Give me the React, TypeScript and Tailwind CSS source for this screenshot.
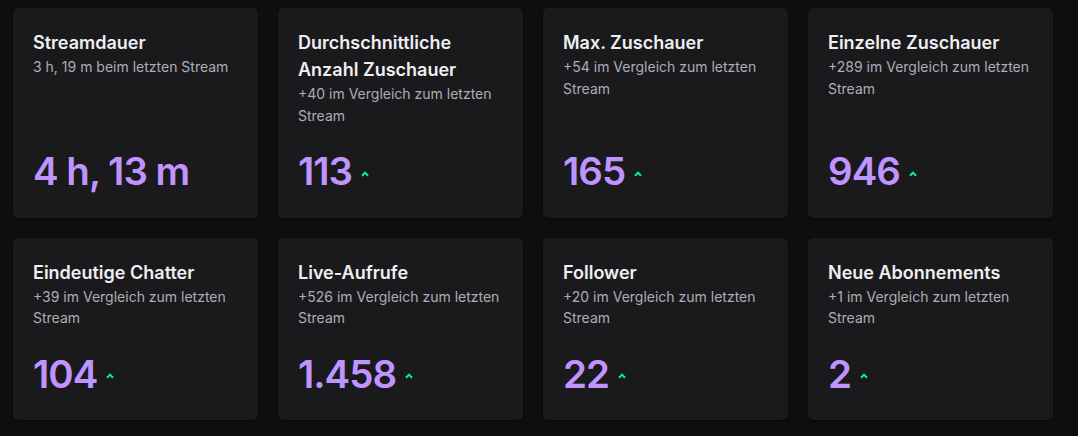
const stats = [
  { title: "Streamdauer", sub: "3 h, 19 m beim letzten Stream", value: "4 h, 13 m", up: false },
  { title: "Durchschnittliche Anzahl Zuschauer", sub: "+40 im Vergleich zum letzten Stream", value: "113", up: true },
  { title: "Max. Zuschauer", sub: "+54 im Vergleich zum letzten Stream", value: "165", up: true },
  { title: "Einzelne Zuschauer", sub: "+289 im Vergleich zum letzten Stream", value: "946", up: true },
  { title: "Eindeutige Chatter", sub: "+39 im Vergleich zum letzten Stream", value: "104", up: true },
  { title: "Live-Aufrufe", sub: "+526 im Vergleich zum letzten Stream", value: "1.458", up: true },
  { title: "Follower", sub: "+20 im Vergleich zum letzten Stream", value: "22", up: true },
  { title: "Neue Abonnements", sub: "+1 im Vergleich zum letzten Stream", value: "2", up: true },
];

function ArrowUp() {
  return (
    <svg width="8" height="6" viewBox="0 0 8 6" className="mb-[19px] ml-[9px] shrink-0">
      <path d="M1 4.8 L4 1.6 L7 4.8" fill="none" stroke="#00f593" strokeWidth="2" />
    </svg>
  );
}

function StatCard({ title, sub, value, up }: (typeof stats)[number]) {
  return (
    <div className="flex flex-col rounded-[5px] bg-[#1a1a1d] px-[20px] pt-[21px] pb-[22px] shadow-[0_1px_2px_rgba(0,0,0,0.5)]">
      <h3 className="text-[18px] leading-[27px] font-semibold text-[#efeff1]">{title}</h3>
      <p className="text-[14px] leading-[21.5px] text-[#adadb8]">{sub}</p>
      <div className="mt-auto flex items-end pt-[22px]">
        <span className="text-[38.5px] leading-[47.5px] font-semibold tracking-[-1px] text-[#bf94ff]">{value}</span>
        {up && <ArrowUp />}
      </div>
    </div>
  );
}

export default function App() {
  return (
    <div className="h-[436px] w-[1078px] bg-[#0e0e10] pt-[8px] pl-[13px] font-['Inter',sans-serif]">
      <div className="grid grid-cols-[repeat(4,245px)] gap-[20px]">
        {stats.map((s) => (
          <StatCard key={s.title} {...s} />
        ))}
      </div>
    </div>
  );
}
